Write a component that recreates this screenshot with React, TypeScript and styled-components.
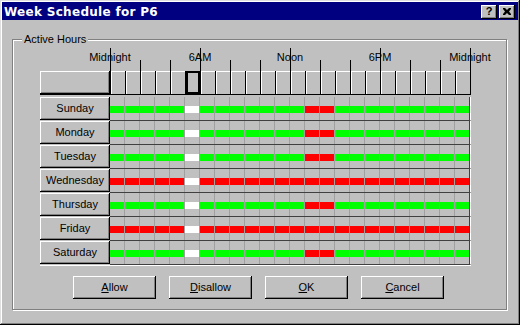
import React from 'react';
import styled, { createGlobalStyle, css } from 'styled-components';

const FACE = '#c0c0c0';
const SHADOW = '#808080';
const ON = '#00ff00';
const OFF = '#ff0000';

const GlobalStyle = createGlobalStyle`
  html, body {
    margin: 0;
    padding: 0;
    background: ${ FACE };
  }
  body {
    font-family: "Liberation Sans", Arial, sans-serif;
    font-size: 11px;
    color: #000;
  }
  * { box-sizing: border-box; }
`;

const raised = css`
  background: ${ FACE };
  box-shadow: inset -1px -1px #000, inset 1px 1px #fff, inset -2px -2px ${ SHADOW }, inset 2px 2px ${ FACE };
`;

type Slot = 'on' | 'off' | 'none';

const weekday: Slot[] = Array.from({ length: 24 }, (_, h) => (h === 5 ? 'none' : h === 13 || h === 14 ? 'off' : 'on'));
const blocked: Slot[] = Array.from({ length: 24 }, (_, h) => (h === 5 ? 'none' : 'off'));

const WEEK: { day: string; slots: Slot[] }[] = [
  { day: 'Sunday', slots: weekday },
  { day: 'Monday', slots: weekday },
  { day: 'Tuesday', slots: weekday },
  { day: 'Wednesday', slots: blocked },
  { day: 'Thursday', slots: weekday },
  { day: 'Friday', slots: blocked },
  { day: 'Saturday', slots: weekday },
];

const LABELS = ['Midnight', '6AM', 'Noon', '6PM', 'Midnight'];

const Window = styled.div`
  width: 520px;
  height: 325px;
  padding: 2px;
  background: ${ FACE };
  box-shadow: inset -1px -1px #000, inset 1px 1px #dfdfdf, inset -2px -2px ${ SHADOW }, inset 2px 2px #fff;
  display: flex;
  flex-direction: column;
`;

const TitleBar = styled.div`
  height: 18px;
  background: #000080;
  display: flex;
  align-items: center;
  padding: 1px 3px 0 2px;
`;

const Title = styled.div`
  flex: 1;
  color: #fff;
  font-family: "DejaVu Sans", Verdana, sans-serif;
  font-weight: bold;
  font-size: 12px;
  letter-spacing: 0.3px;
`;

const TitleButtons = styled.div`
  display: flex;
  gap: 2px;
`;

const TitleButton = styled.div`
  ${ raised };
  width: 16px;
  height: 14px;
  display: flex;
  align-items: center;
  justify-content: center;
  font-weight: bold;
  font-size: 11px;
  line-height: 1;
  padding-bottom: 1px;
`;

const Body = styled.div`
  padding: 19px 0 0 10px;
`;

const GroupBox = styled.div`
  position: relative;
  width: 495px;
  height: 271px;
  border: 1px solid ${ SHADOW };
  box-shadow: inset 1px 1px #fff, 1px 1px #fff;
  padding: 8px 0 0 27px;
`;

const Legend = styled.span`
  position: absolute;
  top: -8px;
  left: 9px;
  padding: 0 2px;
  background: ${ FACE };
  line-height: 14px;
`;

const Schedule = styled.div`
  width: 431px;
  display: flex;
  flex-direction: column;
`;

const Ruler = styled.div`
  position: relative;
  height: 23px;
`;

const Tick = styled.div<{ $x: number; $major?: boolean }>`
  position: absolute;
  z-index: 1;
  left: ${ p => p.$x }px;
  top: ${ p => (p.$major ? 0 : 12) }px;
  bottom: 0;
  width: 1px;
  background: #000;
`;

const TickLabel = styled.span<{ $x: number }>`
  position: absolute;
  top: 3px;
  left: ${ p => p.$x }px;
  transform: translateX(-50%);
  line-height: 13px;
  white-space: nowrap;
`;

const HeaderRow = styled.div`
  display: flex;
  height: 24px;
  border-bottom: 1px solid #000;
`;

const Corner = styled.div`
  ${ raised };
  width: 70px;
  height: 23px;
`;

const HourCells = styled.div`
  display: flex;
  border-right: 1px solid #000;
`;

const HourCell = styled.div<{ $focused?: boolean }>`
  width: 15px;
  height: 23px;
  border-left: 1px solid #000;
  box-shadow: ${ p => (p.$focused ? 'inset 0 0 0 2px #000' : 'inset 1px 1px #fff') };
`;

const Rows = styled.div`
  margin-top: 2px;
  border-bottom: 1px solid #fff;
`;

const Row = styled.div`
  display: flex;
  height: 24px;
`;

const DayButton = styled.div`
  ${ raised };
  width: 70px;
  height: 23px;
  display: flex;
  align-items: center;
  justify-content: center;
  padding-bottom: 1px;
`;

const Cells = styled.div`
  display: flex;
  height: 24px;
  border-bottom: 1px solid #404040;
  border-right: 1px solid #fff;
`;

const Cell = styled.div`
  width: 15px;
  padding-top: 9px;
  border-right: 1px solid #a0a0a0;
  &:last-child { border-right-color: #404040; }
`;

const Bar = styled.div<{ $slot: Slot }>`
  height: 7px;
  background: ${ p => (p.$slot === 'on' ? ON : p.$slot === 'off' ? OFF : '#fff') };
`;

const Actions = styled.div`
  display: flex;
  justify-content: center;
  gap: 13px;
  margin: 10px 0 0 -27px;
  padding-right: 2px;
`;

const Button = styled.button`
  ${ raised };
  width: 83px;
  height: 23px;
  border: none;
  padding: 0 0 1px;
  font: inherit;
  color: #000;
`;

const App = () => (
  <Window>
    <GlobalStyle />
    <TitleBar>
      <Title>Week Schedule for P6</Title>
      <TitleButtons>
        <TitleButton>?</TitleButton>
        <TitleButton>
          <svg width="8" height="7" viewBox="0 0 8 7">
            <path d="M0 0h2l2 2 2-2h2v1L6 3.5 8 6v1H6L4 5 2 7H0V6l2-2.5L0 1z" fill="#000" />
          </svg>
        </TitleButton>
      </TitleButtons>
    </TitleBar>

    <Body>
      <GroupBox>
        <Legend>Active Hours</Legend>
        <Schedule>
          <Ruler>
            { LABELS.map((l, i) => <TickLabel key={ i } $x={ 70 + i * 90 }>{ l }</TickLabel>) }
            { Array.from({ length: 13 }, (_, j) => (
              <Tick key={ j } $x={ 70 + j * 30 } $major={ j % 3 === 0 } />
            )) }
          </Ruler>

          <HeaderRow>
            <Corner />
            <HourCells>
              { Array.from({ length: 24 }, (_, h) => <HourCell key={ h } $focused={ h === 5 } />) }
            </HourCells>
          </HeaderRow>

          <Rows>
            { WEEK.map(({ day, slots }) => (
              <Row key={ day }>
                <DayButton>{ day }</DayButton>
                <Cells>
                  { slots.map((s, h) => <Cell key={ h }><Bar $slot={ s } /></Cell>) }
                </Cells>
              </Row>
            )) }
          </Rows>
        </Schedule>

        <Actions>
          <Button><u>A</u>llow</Button>
          <Button><u>D</u>isallow</Button>
          <Button><u>O</u>K</Button>
          <Button><u>C</u>ancel</Button>
        </Actions>
      </GroupBox>
    </Body>
  </Window>
);

export default App;
